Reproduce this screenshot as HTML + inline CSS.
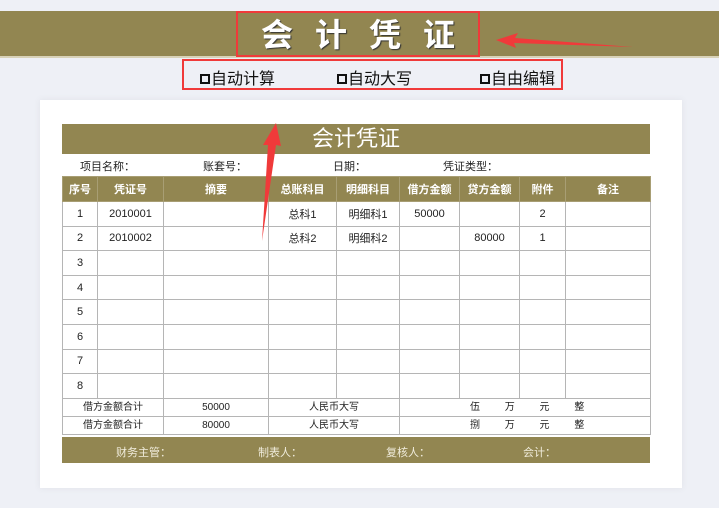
<!DOCTYPE html><html><head><meta charset="utf-8"><style>
*{margin:0;padding:0;box-sizing:border-box}
body{width:719px;height:508px;background:#eef0f6;position:relative;overflow:hidden;font-family:"Liberation Sans","Noto Sans CJK SC",sans-serif;}
.bar{position:absolute;left:0;top:11px;width:719px;height:47px;background:#928651;border-bottom:2px solid #d8d2b8}
.ttl{position:absolute;left:236px;top:11px;width:244px;height:46px;border:2px solid #f03a3a;color:#fff;font-weight:bold;font-size:32px;text-align:center;line-height:44px;letter-spacing:22px;padding-left:22px;text-shadow:1px 1px 1px #333}
.opts{position:absolute;left:182px;top:59px;width:381px;height:31px;border:2px solid #f03a3a;font-size:16px;color:#111}
.opts span{position:absolute;top:4px}
.opts i{display:inline-block;width:10px;height:10px;border:2px solid #111;vertical-align:0px;margin-right:1px}
.card{position:absolute;left:40px;top:100px;width:642px;height:388px;background:#fff;box-shadow:0 0 6px #dfe1e8}
.tb{position:absolute;left:62px;top:124px;width:588px;height:30px;background:#928651;color:#fff;font-size:22px;text-align:center;line-height:30px}
.info{position:absolute;top:158px;font-size:11px;color:#222}
table{position:absolute;left:62px;top:176px;border-collapse:collapse;width:588px;table-layout:fixed;font-size:11px;color:#222}
td{border:1px solid #b5b5b5;text-align:center;height:24.6px;padding:0;vertical-align:middle}
tr.h td{background:#928651;color:#fff;font-weight:bold;height:25px;border-color:#a89e74}
tr.s td{height:18px;font-size:10px;line-height:16px;padding-top:1px}
.ft{position:absolute;left:62px;top:437px;width:588px;height:26px;background:#928651;color:#f0ecdc;font-size:11px}
.ft span{position:absolute;top:7px}
</style></head><body>
<div class="bar"></div>
<div class="ttl">会计凭证</div>
<div class="opts"><span style="left:16px"><i></i>自动计算</span><span style="left:153px"><i></i>自动大写</span><span style="left:296px"><i></i>自由编辑</span></div>
<div class="card"></div>
<div class="tb">会计凭证</div>
<div class="info" style="left:80px">项目名称：</div>
<div class="info" style="left:203px">账套号：</div>
<div class="info" style="left:333px">日期：</div>
<div class="info" style="left:443px">凭证类型：</div>
<table>
<colgroup><col style="width:35px"><col style="width:66px"><col style="width:105px"><col style="width:68px"><col style="width:63px"><col style="width:60px"><col style="width:60px"><col style="width:46px"><col style="width:85px"></colgroup>
<tr class="h"><td>序号</td><td>凭证号</td><td>摘要</td><td>总账科目</td><td>明细科目</td><td>借方金额</td><td>贷方金额</td><td>附件</td><td>备注</td></tr>
<tr><td>1</td><td>2010001</td><td></td><td>总科1</td><td>明细科1</td><td>50000</td><td></td><td>2</td><td></td></tr>
<tr><td>2</td><td>2010002</td><td></td><td>总科2</td><td>明细科2</td><td></td><td>80000</td><td>1</td><td></td></tr>
<tr><td>3</td><td></td><td></td><td></td><td></td><td></td><td></td><td></td><td></td></tr>
<tr><td>4</td><td></td><td></td><td></td><td></td><td></td><td></td><td></td><td></td></tr>
<tr><td>5</td><td></td><td></td><td></td><td></td><td></td><td></td><td></td><td></td></tr>
<tr><td>6</td><td></td><td></td><td></td><td></td><td></td><td></td><td></td><td></td></tr>
<tr><td>7</td><td></td><td></td><td></td><td></td><td></td><td></td><td></td><td></td></tr>
<tr><td>8</td><td></td><td></td><td></td><td></td><td></td><td></td><td></td><td></td></tr>
<tr class="s"><td colspan="2">借方金额合计</td><td>50000</td><td colspan="2">人民币大写</td><td colspan="4" style="text-align:left;padding-left:70px;word-spacing:22px">伍 万 元 整</td></tr>
<tr class="s"><td colspan="2">借方金额合计</td><td>80000</td><td colspan="2">人民币大写</td><td colspan="4" style="text-align:left;padding-left:70px;word-spacing:22px">捌 万 元 整</td></tr>
</table>
<div class="ft"><span style="left:54px">财务主管：</span><span style="left:196px">制表人：</span><span style="left:324px">复核人：</span><span style="left:461px">会计：</span></div>
<svg style="position:absolute;left:0;top:0" width="719" height="508">
<polygon points="633,47 515,38 518,33 496,40 516,48 514,43" fill="#f03a3a"/>
<polygon points="262,241 268,145 263,145 276,123 281,146 276,145" fill="#f03a3a"/>
</svg>
</body></html>
